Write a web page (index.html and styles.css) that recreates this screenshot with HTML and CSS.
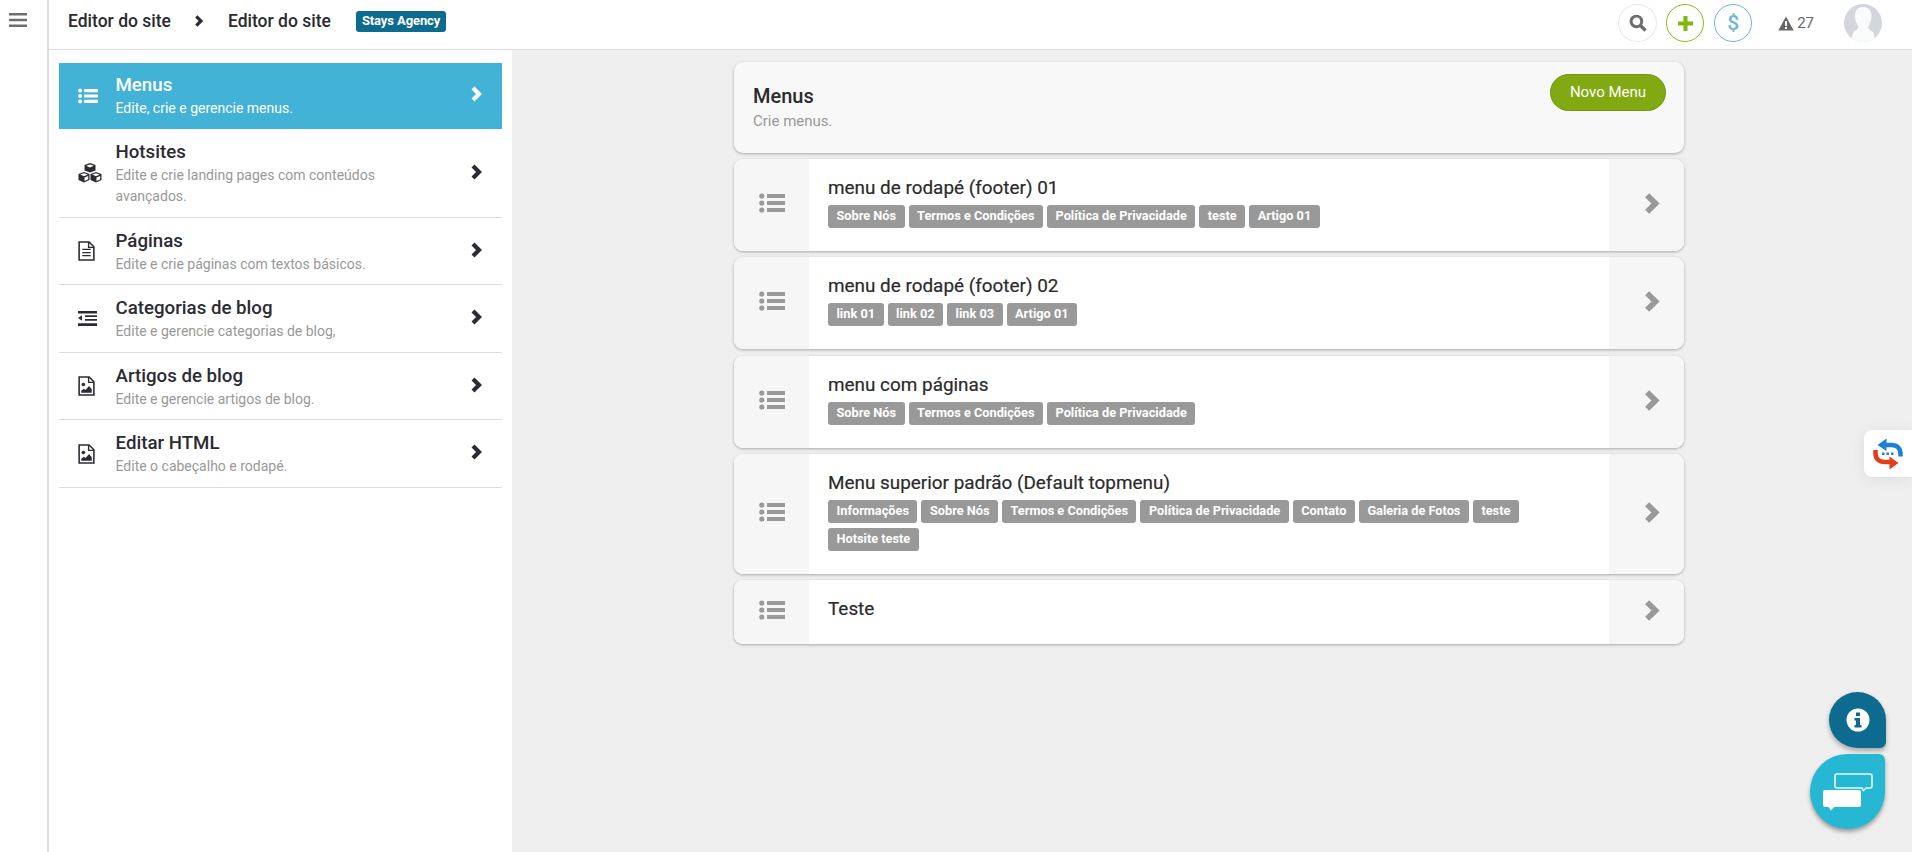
FILE: index.html
```html
<!DOCTYPE html>
<html lang="pt-BR">
<head>
<meta charset="utf-8">
<title>Editor do site</title>
<link rel="stylesheet" href="styles.css">
</head>
<body>
<svg class="defs" width="0" height="0" aria-hidden="true">
  <symbol id="chev" viewBox="0 0 13 18"><path d="M3 3l6 6-6 6" fill="none" stroke="currentColor" stroke-width="4.200"/></symbol>
  <symbol id="list" viewBox="0 0 26 20"><circle cx="2.800" cy="3" r="2.600"/><circle cx="2.800" cy="10" r="2.600"/><circle cx="2.800" cy="17" r="2.600"/><path d="M8 1h18v4H8zM8 8h18v4H8zM8 15h18v4H8z"/></symbol>
  <symbol id="imgfile" viewBox="0 0 16 19"><path d="M1 1h9.500L15 5.500V18H1z" fill="#fff" stroke="currentColor" stroke-width="1.500"/><path d="M10 1v5h5" fill="none" stroke="currentColor" stroke-width="1.300"/><circle cx="5" cy="8" r="1.700"/><path d="M3 16v-2l2.500-2 1.500 1.200L10.500 9.500 13 12.500V16z"/></symbol>
</svg>
<div class="app">
  <aside class="rail">
    <svg class="burger" viewBox="0 0 18 14"><path d="M0 0h18v2.400H0zM0 5.800h18v2.400H0zM0 11.600h18V14H0z"/></svg>
  </aside>
  <div class="shell">
    <header class="topbar">
      <div class="crumbs">
        <span class="crumb">Editor do site</span>
        <svg class="crumb-chev"><use href="#chev"/></svg>
        <span class="crumb">Editor do site</span>
        <span class="agency">Stays Agency</span>
      </div>
      <div class="tools">
        <span class="circle circle-search">
          <svg width="18" height="18" viewBox="0 0 17 17"><circle cx="7" cy="7" r="5" fill="none" stroke="#6d6d6d" stroke-width="2.800"/><path d="m10.800 10.800 4.800 4.800" stroke="#6d6d6d" stroke-width="3.200"/></svg>
        </span>
        <span class="circle circle-plus">
          <svg width="15" height="15" viewBox="0 0 15 15"><path d="M5.500 0h4v5.500H15v4H9.500V15h-4V9.500H0v-4h5.500z" fill="#7fb80e"/></svg>
        </span>
        <span class="circle circle-dollar">$</span>
        <span class="alert">
          <svg width="16" height="15" viewBox="0 0 16 15"><path d="M8 .5 15.700 14.500H.3z" fill="#666"/><path d="M7 5h2v5H7zM7 11h2v2H7z" fill="#fff"/></svg>
          27
        </span>
        <svg class="avatar" viewBox="0 0 38 38"><defs><clipPath id="av"><circle cx="19" cy="19" r="19"/></clipPath></defs><g clip-path="url(#av)"><rect width="38" height="38" fill="#d3d6da"/><path d="M19 3c6 0 8.500 4 8.500 9.500 0 4-1.500 7-3 9.500-1 2 .5 3.500 3 5 2.500 1.500 3 4 3 11H8c0-7 .5-9.500 3-11 2.500-1.500 4-3 3-5-1.500-2.500-3-5.500-3-9.500C11 7 13 3 19 3z" fill="#fafbfb"/></g></svg>
      </div>
    </header>
    <div class="body">
      <nav class="side">
        <a class="side-item active">
          <svg class="side-icon list-ic"><use href="#list"/></svg>
          <span class="side-text"><b class="side-title">Menus</b><span class="side-desc">Edite, crie e gerencie menus.</span></span>
          <svg class="side-chev"><use href="#chev"/></svg>
        </a>
        <a class="side-item">
          <svg class="side-icon" viewBox="0 0 24 20"><g fill="#2b2b33"><path d="M12 0l5.500 2v5.500L12 9.500 6.500 7.500V2z"/><path d="M6 9l5.500 2v6L6 19.500.5 17v-6z"/><path d="M18 9l5.500 2v6L18 19.500 12.500 17v-6z"/></g><path d="M12 4.500l3.800-1.700-3.800-1.400-3.800 1.400zM6 13.300l3.800-1.700L6 10.200l-3.800 1.400zM18 13.300l3.800-1.700L18 10.200l-3.800 1.400z" fill="#fff"/><path d="M18.500 14.500l3.700-1.600v3.400l-3.700 1.600zM6.500 14.500l3.700-1.600v3.400l-3.700 1.600z" fill="#fff"/></svg>
          <span class="side-text"><b class="side-title">Hotsites</b><span class="side-desc">Edite e crie landing pages com conteúdos avançados.</span></span>
          <svg class="side-chev"><use href="#chev"/></svg>
        </a>
        <a class="side-item">
          <svg class="side-icon file-ic" viewBox="0 0 16 19"><path d="M1 1h9.500L15 5.500V18H1z" fill="none" stroke="currentColor" stroke-width="1.500"/><path d="M10 1v5h5" fill="none" stroke="currentColor" stroke-width="1.300"/><path d="M4 8h8M4 11h8M4 14h8" stroke="currentColor" stroke-width="1.200"/></svg>
          <span class="side-text"><b class="side-title">Páginas</b><span class="side-desc">Edite e crie páginas com textos básicos.</span></span>
          <svg class="side-chev"><use href="#chev"/></svg>
        </a>
        <a class="side-item">
          <svg class="side-icon outdent-ic" viewBox="0 0 19 15"><path d="M0 0h19v2.400H0zM7 4.200h12v1.800H7zM7 8h12v1.800H7zM0 12.300h19V15H0zM4 4.200v5.600L0 7z"/></svg>
          <span class="side-text"><b class="side-title">Categorias de blog</b><span class="side-desc">Edite e gerencie categorias de blog,</span></span>
          <svg class="side-chev"><use href="#chev"/></svg>
        </a>
        <a class="side-item">
          <svg class="side-icon file-ic"><use href="#imgfile"/></svg>
          <span class="side-text"><b class="side-title">Artigos de blog</b><span class="side-desc">Edite e gerencie artigos de blog.</span></span>
          <svg class="side-chev"><use href="#chev"/></svg>
        </a>
        <a class="side-item">
          <svg class="side-icon file-ic"><use href="#imgfile"/></svg>
          <span class="side-text"><b class="side-title">Editar HTML</b><span class="side-desc">Edite o cabeçalho e rodapé.</span></span>
          <svg class="side-chev"><use href="#chev"/></svg>
        </a>
      </nav>
      <main class="main">
        <div class="column">
          <section class="head-card">
            <div>
              <h1 class="head-title">Menus</h1>
              <p class="head-desc">Crie menus.</p>
            </div>
            <button class="new-btn">Novo Menu</button>
          </section>

          <article class="row">
            <div class="row-cap"><svg class="row-list"><use href="#list"/></svg></div>
            <div class="row-main">
              <h2 class="row-title">menu de rodapé (footer) 01</h2>
              <div class="tags"><span class="tag">Sobre Nós</span><span class="tag">Termos e Condições</span><span class="tag">Política de Privacidade</span><span class="tag">teste</span><span class="tag">Artigo 01</span></div>
            </div>
            <div class="row-cap"><svg class="row-chev"><use href="#chev"/></svg></div>
          </article>

          <article class="row">
            <div class="row-cap"><svg class="row-list"><use href="#list"/></svg></div>
            <div class="row-main">
              <h2 class="row-title">menu de rodapé (footer) 02</h2>
              <div class="tags"><span class="tag">link 01</span><span class="tag">link 02</span><span class="tag">link 03</span><span class="tag">Artigo 01</span></div>
            </div>
            <div class="row-cap"><svg class="row-chev"><use href="#chev"/></svg></div>
          </article>

          <article class="row">
            <div class="row-cap"><svg class="row-list"><use href="#list"/></svg></div>
            <div class="row-main">
              <h2 class="row-title">menu com páginas</h2>
              <div class="tags"><span class="tag">Sobre Nós</span><span class="tag">Termos e Condições</span><span class="tag">Política de Privacidade</span></div>
            </div>
            <div class="row-cap"><svg class="row-chev"><use href="#chev"/></svg></div>
          </article>

          <article class="row">
            <div class="row-cap"><svg class="row-list"><use href="#list"/></svg></div>
            <div class="row-main">
              <h2 class="row-title">Menu superior padrão (Default topmenu)</h2>
              <div class="tags"><span class="tag">Informações</span><span class="tag">Sobre Nós</span><span class="tag">Termos e Condições</span><span class="tag">Política de Privacidade</span><span class="tag">Contato</span><span class="tag">Galeria de Fotos</span><span class="tag">teste</span><span class="tag">Hotsite teste</span></div>
            </div>
            <div class="row-cap"><svg class="row-chev"><use href="#chev"/></svg></div>
          </article>

          <article class="row">
            <div class="row-cap"><svg class="row-list"><use href="#list"/></svg></div>
            <div class="row-main">
              <h2 class="row-title">Teste</h2>
            </div>
            <div class="row-cap"><svg class="row-chev"><use href="#chev"/></svg></div>
          </article>
        </div>
      </main>
    </div>
  </div>
</div>

<div class="side-widget">
  <svg width="30" height="32" viewBox="0 0 30 32">
    <path d="M27.500 18.500V16c0-6-3.500-9-9-9H12" fill="none" stroke="#1e7fd6" stroke-width="4.500"/>
    <path d="M13.500 0.500V13L4.500 7z" fill="#1e7fd6"/>
    <path d="M2.500 12v3c0 6 3.500 9 9 9H18" fill="none" stroke="#e23d1c" stroke-width="4.500"/>
    <path d="M16.500 18.500v13L25.500 25z" fill="#e23d1c"/>
    <path d="M9 14.500h2.500V17H9zM13.500 14.500H16V17h-2.500zM18 14.500h2.500V17H18z" fill="#1e7fd6"/>
  </svg>
</div>
<div class="fab fab-info">
  <svg width="24" height="24" viewBox="0 0 24 24"><circle cx="12" cy="12" r="11.500" fill="#fff"/><path d="M10 4.500h4v3.500h-4zM8.500 10h5.500v7h1.500v2.500h-7V17H10v-4.500H8.500z" fill="#0e6b90"/></svg>
</div>
<div class="fab fab-chat">
  <svg width="50" height="38" viewBox="0 0 50 38">
    <path d="M14 1h33a2 2 0 0 1 2 2v10a2 2 0 0 1-2 2h-4l-2.500 2.500-1.500-2.500H14a2 2 0 0 1-2-2V3a2 2 0 0 1 2-2z" fill="none" stroke="#e9f8fb" stroke-width="1.600"/>
    <path d="M2 17h34a2 2 0 0 1 2 2v13a2 2 0 0 1-2 2H11l-3 3.500L5.500 34H2a2 2 0 0 1-2-2V19a2 2 0 0 1 2-2z" fill="#fff"/>
  </svg>
</div>
</body>
</html>
```

FILE: styles.css
```css
* { box-sizing: border-box; }
html, body { margin: 0; height: 100%; }
body {
  font-family: Roboto, "Liberation Sans", sans-serif;
  color: #2b2b2b;
  background: #efefef;
  overflow: hidden;
}
.defs { position: absolute; }
.app { display: flex; height: 852px; }

.rail {
  width: 49px;
  flex: none;
  background: #fff;
  border-right: 2px solid #ddd;
}
.burger {
  display: block;
  width: 18px;
  height: 14px;
  margin: 13px 0 0 9px;
  fill: #6f6f6f;
}

.shell { flex: 1; display: flex; flex-direction: column; min-width: 0; }

.topbar {
  height: 50px;
  flex: none;
  background: #fff;
  border-bottom: 1px solid #ddd;
  display: flex;
  align-items: flex-start;
  justify-content: space-between;
}
.crumbs {
  display: flex;
  align-items: center;
  height: 42px;
  padding-left: 19px;
}
.crumb { font-size: 17.500px; font-weight: 500; color: #2a2a30; }
.crumb-chev { width: 10px; height: 14px; margin: 0 24px 0 23px; color: #2b2b33; }
.agency {
  margin-left: 25px;
  height: 21px;
  padding: 0 6px;
  line-height: 20px;
  font-size: 13px;
  font-weight: 700;
  color: #fff;
  background: #0e6b90;
  border-radius: 3px;
  letter-spacing: -.1px;
}
.tools { display: flex; align-items: center; padding: 4px 30px 0 0; }
.circle {
  width: 38px;
  height: 38px;
  border-radius: 50%;
  display: flex;
  align-items: center;
  justify-content: center;
  margin-right: 10px;
}
.circle-search { width: 39px; margin-right: 9px; border: 1px solid #e8e8e8; }
.circle-plus { border: 1px solid #8dbb1c; }
.circle-dollar {
  border: 1px solid #6eb6de;
  color: #6eb6de;
  font-size: 21px;
  font-weight: 500;
}
.alert {
  display: flex;
  align-items: center;
  gap: 3px;
  margin: 0 30px 0 16px;
  font-size: 15px;
  color: #666;
}
.avatar { width: 38px; height: 38px; }

.body { flex: 1; display: flex; min-height: 0; }

.side {
  width: 463px;
  flex: none;
  background: #fff;
  padding: 13px 10px 0;
}
.side-item {
  display: flex;
  align-items: center;
  padding: 10px 19px 9.500px 19px;
  border-bottom: 1px solid #ddd;
  color: #2b2b33;
}
.side-item.active {
  background: #43b2d7;
  color: #fff;
  border-bottom: 0;
  padding-top: 9px;
  padding-bottom: 10px;
}
.side-icon { width: 24px; height: 20px; flex: none; fill: currentColor; }
.list-ic { width: 20px; height: 16px; margin-right: 4px; }
.file-ic { width: 17px; height: 20px; margin-right: 7px; }
.outdent-ic { width: 19px; height: 15px; margin-right: 5px; }
.side-text { display: block; width: 300px; margin-left: 13.500px; flex: none; }
.side-title { display: block; font-size: 18.700px; font-weight: 500; line-height: 26px; }
.side-desc { display: block; font-size: 14px; line-height: 21px; color: #999; }
.active .side-desc { color: #fff; }
.side-chev { width: 13px; height: 18px; margin: 0 0 3px auto; color: inherit; flex: none; }

.main { flex: 1; min-width: 0; display: flex; justify-content: center; padding: 12px 6px 0 0; }
.column { width: 950px; }

.head-card {
  height: 91px;
  background: #f8f8f8;
  border-radius: 9px;
  box-shadow: 0 1px 3px rgba(0, 0, 0, .3);
  display: flex;
  justify-content: space-between;
  align-items: flex-start;
  padding: 12px 18px 0 19px;
  margin-bottom: 6px;
}
.head-title { margin: 10px 0 0; font-size: 20px; font-weight: 500; line-height: 25px; color: #2b2b2b; }
.head-desc { margin: 1px 0 0; font-size: 15px; line-height: 22px; color: #999; }
.new-btn {
  width: 116px;
  height: 37px;
  border: 1px solid #72960f;
  border-radius: 19px;
  background: #81aa12;
  color: #fff;
  font: 400 15px Roboto, sans-serif;
  padding: 0 0 2px;
}

.row {
  display: flex;
  background: #fff;
  border-radius: 9px;
  box-shadow: 0 1px 3px rgba(0, 0, 0, .3);
  margin-bottom: 6.330px;
  overflow: hidden;
}
.row-cap {
  width: 75px;
  flex: none;
  background: #f6f6f6;
  display: flex;
  align-items: center;
  justify-content: center;
}
.row-list { width: 26px; height: 20px; fill: #999; margin-bottom: 4px; }
.row-chev { width: 18px; height: 25px; color: #999; margin: 0 0 3px 10px; }
.row-main { flex: 1; min-width: 0; padding: 16px 19px 0; min-height: 64px; }
.row-title { margin: 0; font-size: 18.900px; font-weight: 400; line-height: 26px; color: #2b2b2b; -webkit-text-stroke: .2px #2b2b2b; }
.tags { display: flex; flex-wrap: wrap; gap: 5px 4px; padding: 4px 60px 23px 0; }
.tag {
  height: 23px;
  line-height: 22px;
  padding: 0 8.500px;
  font-size: 12.750px;
  font-weight: 700;
  color: #fff;
  background: #999;
  border-radius: 3px;
}

.side-widget {
  position: absolute;
  right: 0;
  top: 430px;
  width: 48px;
  height: 47px;
  background: #fff;
  border-radius: 8px 0 0 8px;
  box-shadow: 0 2px 14px rgba(0, 0, 0, .08);
  display: flex;
  align-items: center;
  justify-content: flex-start;
  padding-left: 9px;
}
.fab {
  position: absolute;
  display: flex;
  align-items: center;
  justify-content: center;
}
.fab-info {
  left: 1829px;
  top: 692px;
  width: 57px;
  height: 56px;
  background: #0e6b90;
  border-radius: 50% 50% 6px 50%;
  box-shadow: 0 3px 5px rgba(0, 0, 0, .3);
}
.fab-chat {
  left: 1810px;
  top: 754px;
  width: 75px;
  height: 75px;
  background: #26b8d3;
  border-radius: 50% 6px 50% 50%;
  box-shadow: 0 3px 4px rgba(0, 0, 0, .35);
}
```
